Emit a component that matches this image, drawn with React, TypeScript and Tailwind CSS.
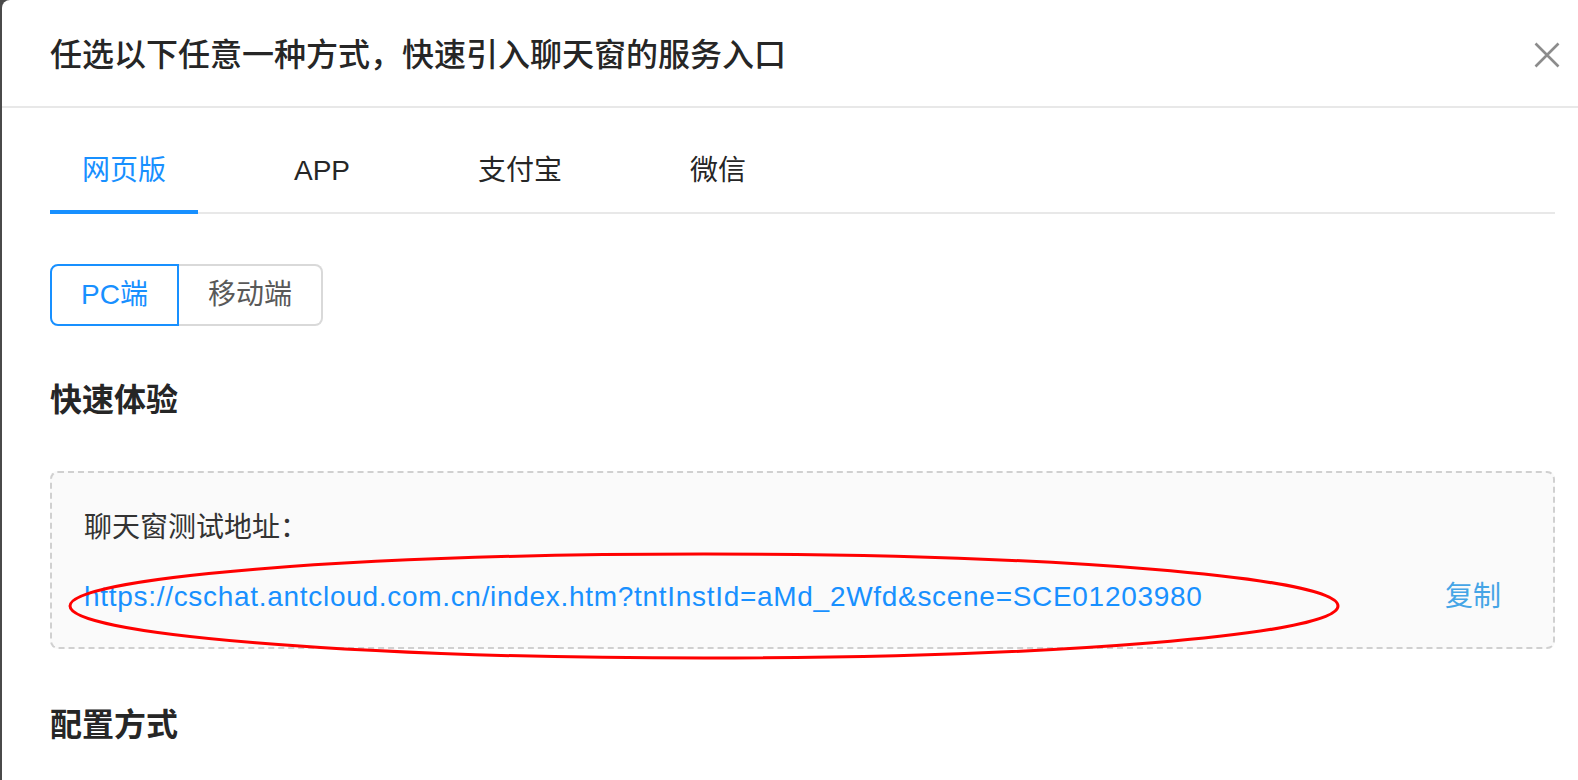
import { useState } from "react"

const tabs = ["网页版", "APP", "支付宝", "微信"]
const testUrl =
  "https://cschat.antcloud.com.cn/index.htm?tntInstId=aMd_2Wfd&scene=SCE01203980"

export default function App() {
  const [activeTab, setActiveTab] = useState(0)
  const [device, setDevice] = useState<"pc" | "mobile">("pc")

  return (
    <div
      className="flex h-[780px] w-full overflow-hidden bg-[#4a4a4a]"
      style={{ fontFamily: '"Liberation Sans", "Noto Sans CJK SC", sans-serif' }}
    >
      <div className="relative ml-[2px] flex-1 rounded-tl-[8px] bg-white">
        {/* modal header */}
        <div className="flex h-[108px] items-center justify-between border-b-2 border-[#e8e8e8] pl-[48px] pr-[11px] pt-[4px]">
          <h2 className="text-[32px] leading-[44px] font-medium text-[#262626]">
            任选以下任意一种方式，快速引入聊天窗的服务入口
          </h2>
          <button className="flex h-[40px] w-[40px] items-center justify-center">
            <svg width="26" height="26" viewBox="0 0 26 26">
              <path
                d="M1.5 1.5 L24.5 24.5 M24.5 1.5 L1.5 24.5"
                stroke="#8c8c8c"
                strokeWidth="2.6"
                fill="none"
              />
            </svg>
          </button>
        </div>

        {/* modal body */}
        <div className="pl-[48px] pr-[23px] pt-[22px]">
          <div className="relative flex border-b-2 border-[#e8e8e8]">
            {tabs.map((t, i) => (
              <div
                key={t}
                onClick={() => setActiveTab(i)}
                className={`relative mr-[64px] cursor-pointer px-[32px] py-[20px] text-[28px] leading-[42px] ${
                  i === activeTab ? "text-[#1890ff]" : "text-[#262626]"
                }`}
              >
                {t}
                {i === activeTab && (
                  <div className="absolute bottom-[-2px] left-0 right-0 h-[4px] bg-[#1890ff]" />
                )}
              </div>
            ))}
          </div>

          <div className="mt-[50px] flex h-[62px]">
            <button
              onClick={() => setDevice("pc")}
              className={`rounded-l-[8px] border-2 px-[29px] text-[28px] ${
                device === "pc"
                  ? "border-[#1890ff] text-[#1890ff]"
                  : "border-[#d9d9d9] text-[#595959]"
              }`}
            >
              PC端
            </button>
            <button
              onClick={() => setDevice("mobile")}
              className={`rounded-r-[8px] border-2 border-l-0 px-[29px] text-[28px] ${
                device === "mobile"
                  ? "border-[#1890ff] text-[#1890ff]"
                  : "border-[#d9d9d9] text-[#595959]"
              }`}
            >
              移动端
            </button>
          </div>

          <h3 className="mt-[52px] text-[32px] leading-[44px] font-bold text-[#262626]">
            快速体验
          </h3>

          <div className="mt-[49px] h-[178px] rounded-[8px] border-2 border-dashed border-[#d0d0d0] bg-[#fafafa] pl-[32px] pr-[52px] pt-[34px]">
            <div className="text-[28px] leading-[42px] text-[#333333]">
              聊天窗测试地址：
            </div>
            <div className="mt-[27px] flex items-center justify-between text-[28px] leading-[42px]">
              <span className="tracking-[0.7px] text-[#1890ff]">{testUrl}</span>
              <span className="cursor-pointer text-[#45a5e6]">复制</span>
            </div>
          </div>

          <h3 className="mt-[54px] text-[32px] leading-[44px] font-bold text-[#262626]">
            配置方式
          </h3>
        </div>

        {/* red annotation ellipse */}
        <svg
          className="pointer-events-none absolute left-[64px] top-[550px]"
          width="1276"
          height="112"
          viewBox="0 0 1276 112"
        >
          <ellipse
            cx="638"
            cy="56"
            rx="634"
            ry="52"
            stroke="#ff0000"
            strokeWidth="3"
            fill="none"
          />
        </svg>
      </div>
    </div>
  )
}
